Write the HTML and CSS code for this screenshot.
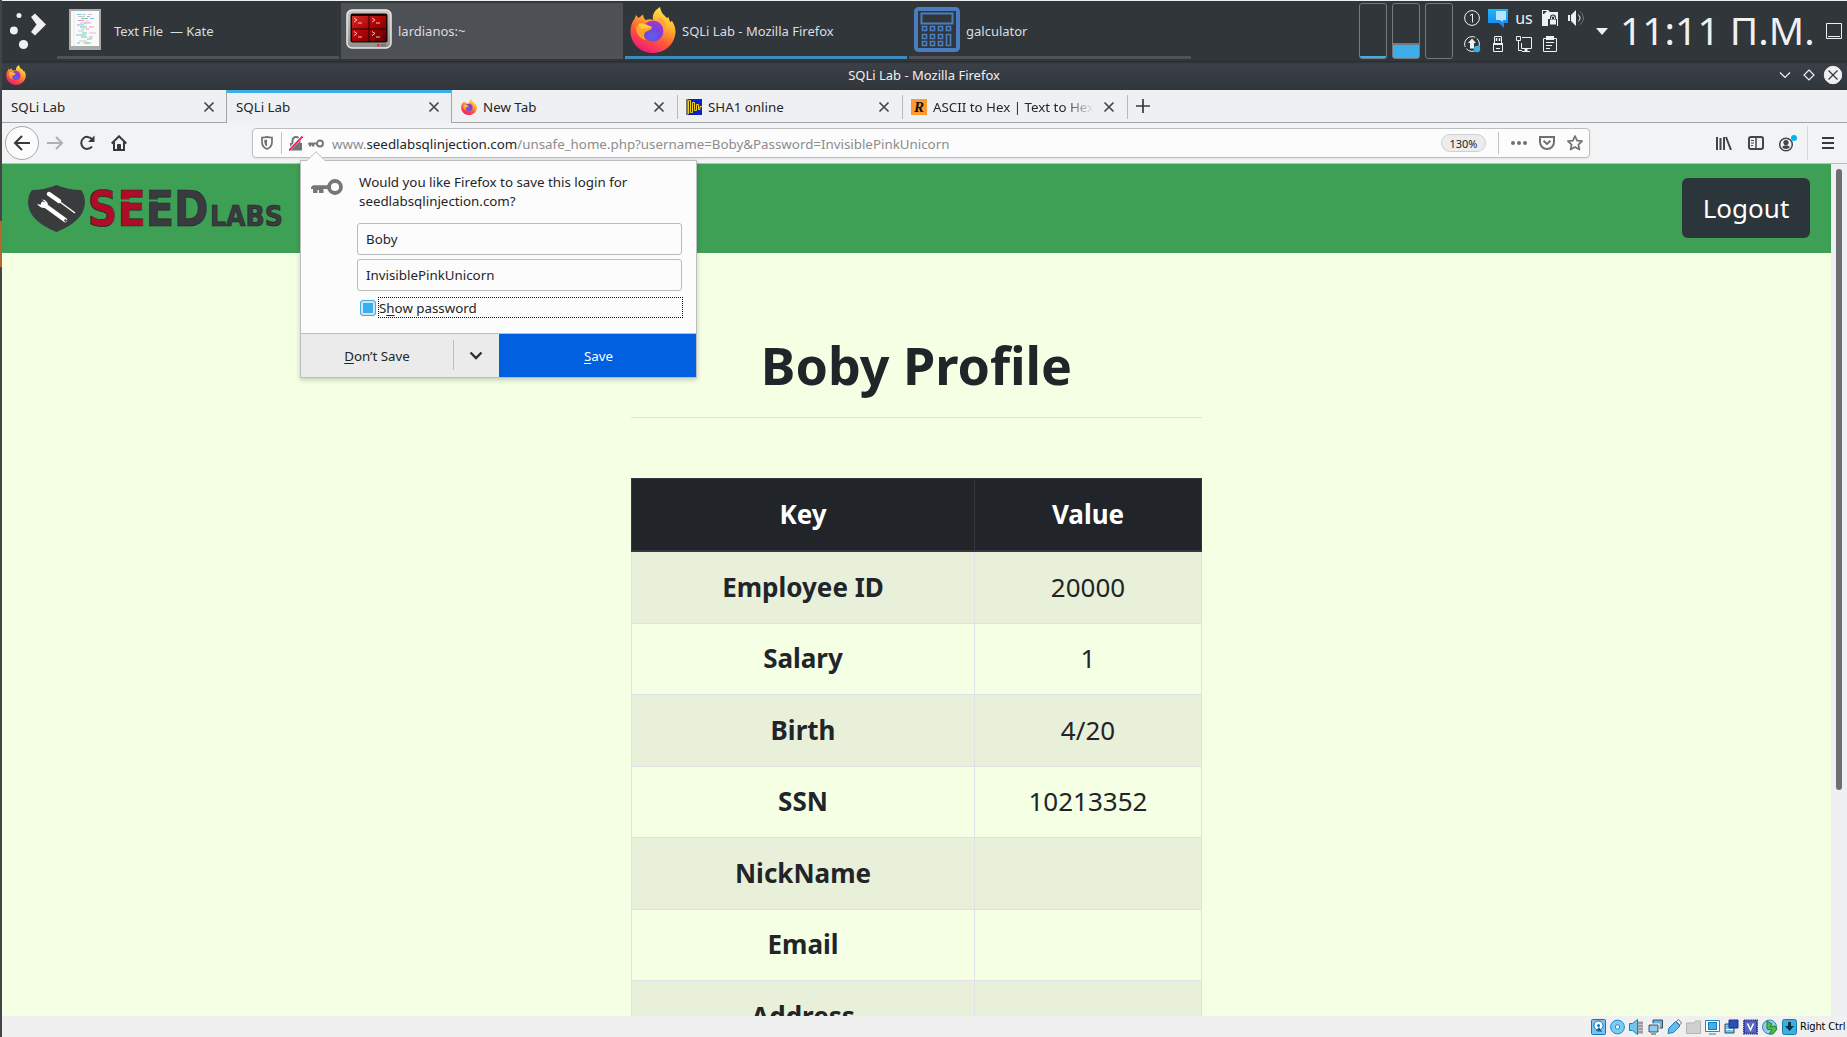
FILE: index.html
```html
<!DOCTYPE html>
<html lang="en">
<head>
<meta charset="utf-8">
<title>SQLi Lab - Mozilla Firefox</title>
<link rel="stylesheet" href="styles.css">
</head>
<body>
<svg class="defs" width="0" height="0" aria-hidden="true">
  <defs>
    <linearGradient id="flame" x1=".8" y1="0" x2=".3" y2="1"><stop offset="0" stop-color="#fff44f"/><stop offset=".35" stop-color="#ffb02e"/><stop offset=".65" stop-color="#ff5a36"/><stop offset="1" stop-color="#f0147e"/></linearGradient>
    <radialGradient id="globe" cx=".45" cy=".75" r=".7"><stop offset="0" stop-color="#5a63e8"/><stop offset=".6" stop-color="#7a3fdc"/><stop offset="1" stop-color="#a638d0"/></radialGradient>
    <linearGradient id="redscreen" x1="0" y1="0" x2="1" y2="1"><stop offset="0" stop-color="#d62b2b"/><stop offset=".45" stop-color="#b30505"/><stop offset="1" stop-color="#5c0000"/></linearGradient>
    <linearGradient id="bubble" x1="0" y1="0" x2="0" y2="1"><stop offset="0" stop-color="#1db5f7"/><stop offset="1" stop-color="#1a7ff0"/></linearGradient>
    <linearGradient id="bezel" x1="0" y1="0" x2="0" y2="1"><stop offset="0" stop-color="#c9c8c4"/><stop offset="1" stop-color="#8f8f8c"/></linearGradient>
    <symbol id="firefox" viewBox="0 0 46 46">
      <path fill="url(#flame)" d="M23 46C10 46 0 36 0.500 23C1 18 2 15 4.500 12L6 8L8.500 11L13 7.500C13.500 10 14 11.500 15.500 13C19 12 21 12 23 13C22 7 25 3 30 0C31 6 34 8 37 11L38.500 10L40 15L42 14C44.500 18 45.500 21 45.500 25C45 37 35 46 23 46Z"/>
      <circle cx="23" cy="24" r="10.500" fill="url(#globe)"/>
      <path fill="#ffa526" d="M6 20C10 17 16 19 22 20C22 23 18 23.500 15.500 25C13.500 27 13.500 30 16 33C10 32 6 27 6 20Z"/>
      <path fill="#ffc83a" d="M8 17C12 15 17 18 22 20C17 22 14 21 12.500 22C10 21 8 20 8 17Z"/>
      <path fill="#ff9a36" d="M26 13C32 15 35 20 33.500 27C37 22 36 15 31 10Z" opacity=".7"/>
    </symbol>
    <symbol id="close" viewBox="0 0 12 12"><path d="M1.500 1.500L10.500 10.500M10.500 1.500L1.500 10.500" fill="none" stroke="#454749" stroke-width="1.700"/></symbol>
    <symbol id="key" viewBox="0 0 32 16"><circle cx="24" cy="8" r="6" fill="none" stroke="#767779" stroke-width="3.800"/><path fill="#767779" d="M18 6.200H2L0 8.200V10H2V14H6.500V11H8V14H12.500V10H18Z"/></symbol>
  </defs>
</svg>

<div class="screen">
  <div class="edge"><i></i></div>
  <div class="desktop">

    <header class="panel">
      <svg class="launcher" width="36" height="37" viewBox="0 0 36 37" fill="#eff0f1"><circle cx="9" cy="2.500" r="2.500"/><circle cx="3.800" cy="17.500" r="4"/><circle cx="13.500" cy="31.500" r="4.600"/><path d="M21 4L25 0.500L36 11.500L25 22.500L21 19L26.500 11.500Z"/></svg>
      <nav class="tasks">
        <div class="task task-kate">
          <svg width="32" height="41" viewBox="0 0 32 41"><rect width="32" height="41" fill="#a9aaac"/><path d="M2 2H30V37H2Z" fill="#fafafa"/><path d="M5 2V37" stroke="#ddd" stroke-width=".6"/>
            <g fill="none" stroke-width="1"><path stroke="#c9c9c9" d="M13 5.500H17M19 5.500H23M9 7.500H16M11 14H17M9 22H15M10 32H18M20 24H27M17 12H20M12 20H16M14 34H20"/><path stroke="#f48fd6" d="M18 7.500H21M9 11.500H15M15 14H22M20 18H25M17 20H20M20 28H24"/><path stroke="#6cd3a4" d="M12 9.500H19M11 18H18M18 24H13M12 28H18M18 30H23M16 34H22"/><path stroke="#69c7f0" d="M8 5.500H12M8 16H15M7 26H17M8 34H11M21 9.500H25"/></g></svg>
          <span>Text File&nbsp; — Kate</span>
        </div>
        <div class="task task-term">
          <svg width="46" height="41" viewBox="0 0 46 41"><rect x="1" y="1" width="44" height="38" rx="5" fill="url(#bezel)" stroke="#e9e8e4" stroke-width="1.500"/><rect x="4.500" y="4.500" width="37" height="29" rx="2" fill="#1a0505"/><path d="M6 7H22.500V19.500H6ZM23.500 7H40V19.500H23.500ZM6 20.500H22.500V32H6ZM23.500 20.500H40V32H23.500Z" fill="url(#redscreen)"/><path d="M8 9L11 11L8 13M12 14H16M26 9L29 11L26 13M30 14H34M8 22.500L11 24.500L8 26.500M12 28H16M26 22.500L29 24.500L26 26.500M30 28H34" fill="none" stroke="#f3c1c1"/><rect x="31" y="35" width="2.500" height="2.500" fill="#f22"/><rect x="35" y="35" width="5" height="2.500" fill="#777"/></svg>
          <span>lardianos:~</span>
        </div>
        <div class="task task-firefox">
          <svg width="46" height="46"><use href="#firefox"/></svg>
          <span>SQLi Lab - Mozilla Firefox</span>
        </div>
        <div class="task task-calc">
          <svg width="46" height="45" viewBox="0 0 46 45" fill="none" stroke="#4a7cc0"><rect x="2" y="2" width="42" height="41" rx="2.500" stroke-width="4"/><rect x="7.500" y="6.500" width="31" height="10" stroke-width="2"/><path stroke-width="1.700" d="M8.500 19.500h4v4h-4zM16.500 19.500h4v4h-4zM24.500 19.500h4v4h-4zM32.500 19.500h4v4h-4zM8.500 27.500h4v4h-4zM16.500 27.500h4v4h-4zM24.500 27.500h4v4h-4zM8.500 34.500h4v4h-4zM16.500 34.500h4v4h-4zM24.500 34.500h4v4h-4zM32.500 27.500h4v11h-4z"/></svg>
          <span>galculator</span>
        </div>
      </nav>
      <div class="meters"><div class="meter meter-low"></div><div class="meter meter-mid"></div><div class="meter"></div></div>
      <div class="tray">
        <svg width="16" height="16" viewBox="0 0 16 16" fill="none" stroke="#eff0f1"><circle cx="8" cy="8" r="7.400"/><path d="M6 5.500L8.500 4V12.500"/></svg>
        <svg width="20" height="19" viewBox="0 0 20 19"><path fill="url(#bubble)" d="M0 0H20V14H16V19L11 14H0Z"/><path fill="#b9e3fb" d="M8 2H18V11H15V13L12 11H8Z"/></svg>
        <span class="layout">us</span>
        <svg width="16" height="16" viewBox="0 0 16 16"><path fill="#eff0f1" d="M0 0H6L8 2H16V16H0Z"/><path d="M6 16V9H8V7.500A3 3 0 0 1 14 7.500V9H15V16Z" fill="#30363a"/><path d="M8 9.500H14V14.500H8Z" fill="#eff0f1"/><path d="M9.500 9V7.500A1.500 1.500 0 0 1 12.500 7.500V9M1 4L4 1H1Z" fill="none" stroke="#eff0f1"/><path d="M1 1H5L2 4H1Z" fill="#30363a"/></svg>
        <svg width="16" height="16" viewBox="0 0 16 16"><path fill="#eff0f1" d="M0 5H2V11H0ZM3 5L8 0V16L3 11Z"/><path d="M10 4.500A4 4 0 0 1 10 11.500" fill="none" stroke="#eff0f1"/><path d="M12 1.500A8 8 0 0 1 12 14.500" fill="none" stroke="#73787b"/></svg>
        <svg width="17" height="17" viewBox="0 0 17 17"><circle cx="8" cy="8" r="7.400" fill="none" stroke="#eff0f1" stroke-dasharray="18 2"/><path fill="#eff0f1" d="M8 2.500L12 7H10V12.500H6V7H4Z"/><circle cx="13" cy="13" r="3.200" fill="#3daee9"/></svg>
        <svg width="12" height="16" viewBox="0 0 12 16" fill="none" stroke="#eff0f1"><path d="M2.500 7V.500H9.500V7M1.500 8.500H10.500V15.500H1.500ZM4 12.500H8" /><path d="M4.500 2V5M7.500 2V5" stroke-width="1.500"/><path d="M1 8H11" stroke-width="2"/></svg>
        <svg width="16" height="16" viewBox="0 0 16 16" fill="none" stroke="#eff0f1"><path d="M.500 .500H4.500V4.500H.500ZM2.500 5V14.500H6M6 1.500H15.500V12.500H5.500V7M6 15.500H14"/><path d="M10 12V15" stroke-width="3"/></svg>
        <svg width="14" height="16" viewBox="0 0 14 16" fill="none" stroke="#eff0f1"><path d="M.500 2.500H13.500V15.500H.500ZM3 6.500H11M3 9.500H9M3 12.500H7"/><path d="M3 2H11" stroke-width="4"/></svg>
      </div>
      <svg class="tray-arrow" width="12" height="7"><path d="M0 0H12L6 7Z" fill="#eff0f1"/></svg>
      <time class="clock">11:11 Π.Μ.</time>
      <svg class="show-desktop" width="16" height="16" fill="none" stroke="#eff0f1"><path d="M.500 .500H15.500V15.500H.500ZM2 13.500H14"/></svg>
    </header>

    <div class="titlebar">
      <svg class="title-icon" width="20" height="20"><use href="#firefox"/></svg>
      <span class="title">SQLi Lab - Mozilla Firefox</span>
      <svg class="win-buttons" width="64" height="20" viewBox="0 0 64 20" fill="none" stroke="#eff0f1"><path d="M2 7.500L7 12.500L12 7.500M31 5L36 10L31 15L26 10Z" stroke-width="1.200"/><circle cx="55" cy="10" r="8.700" fill="#eff0f1"/><path d="M50.500 5.500L59.500 14.500M59.500 5.500L50.500 14.500" stroke="#31363b" stroke-width="1.200"/></svg>
    </div>

    <div class="tabs">
      <div class="tab"><span class="tab-label">SQLi Lab</span><svg width="12" height="12"><use href="#close"/></svg></div>
      <div class="tab active"><span class="tab-label">SQLi Lab</span><svg width="12" height="12"><use href="#close"/></svg></div>
      <div class="tab"><svg class="favicon" width="16" height="16"><use href="#firefox"/></svg><span class="tab-label">New Tab</span><svg width="12" height="12"><use href="#close"/></svg></div>
      <div class="tab divided"><svg class="favicon" width="16" height="16" viewBox="0 0 16 16"><path fill="#0b22c4" d="M0 0H16V16H0Z"/><path d="M1 0V16M2.500 15V1.500H4.500V13.500H6.500V3.500H8.500V11.500H10.500V5.500H12.500V10.500H14V7.500H16" fill="none" stroke="#f1d21c"/></svg><span class="tab-label">SHA1 online</span><svg width="12" height="12"><use href="#close"/></svg></div>
      <div class="tab divided"><span class="favicon letter">R</span><span class="tab-label faded">ASCII to Hex | Text to Hex</span><svg width="12" height="12"><use href="#close"/></svg></div>
      <div class="new-tab"><svg width="14" height="14"><path d="M7 0V14M0 7H14" stroke="#38393b" stroke-width="1.700"/></svg></div>
    </div>

    <div class="toolbar">
      <button class="back"><svg width="18" height="16" viewBox="0 0 18 16" fill="none" stroke="#38393b" stroke-width="2"><path d="M17 8H2M9 1L2 8L9 15"/></svg></button>
      <svg class="forward" width="17" height="14" viewBox="0 0 17 14" fill="none" stroke="#aeb0b2" stroke-width="2"><path d="M0 7H15M9 1L15 7L9 13"/></svg>
      <svg class="reload" width="16" height="16" viewBox="0 0 16 16" fill="none" stroke="#38393b" stroke-width="2"><path d="M12.800 4A6 6 0 1 0 13 11.500"/><path d="M15.500 .500V7H9Z" fill="#38393b" stroke="none"/></svg>
      <svg class="home" width="16" height="16" viewBox="0 0 16 16" fill="none" stroke="#38393b" stroke-width="2"><path d="M.700 8.500L8 1.300L15.300 8.500M3 7V15H13V7"/><path d="M6.500 15V9.500H9.500V15" fill="#38393b" stroke-width="1"/></svg>
      <div class="urlbar">
        <svg class="shield" width="12" height="14" viewBox="0 0 12 14"><path d="M1 1.500Q4 1.500 6 .900Q8 1.500 11 1.500V6Q11 11 6 13Q1 11 1 6Z" fill="none" stroke="#6f7072" stroke-width="1.700"/><path d="M6 3.500V10.500Q3.300 9 3.300 6V4Z" fill="#6f7072"/></svg>
        <i class="bar"></i>
        <svg class="lock" width="14" height="15" viewBox="0 0 14 15"><path d="M1 7H13V14.500H1Z" fill="#737475"/><path d="M3.500 7V4.500A3.500 3.500 0 0 1 10.500 4.500V7" fill="none" stroke="#737475" stroke-width="2"/><path d="M0 14L13 .500" stroke="#fff" stroke-width="3"/><path d="M0 14.500L13.500 .500" stroke="#ff0f4f" stroke-width="1.800"/></svg>
        <svg class="key" width="16" height="9"><use href="#key"/></svg>
        <span class="url">www.<b>seedlabsqlinjection.com</b>/unsafe_home.php?username=Boby&amp;Password=InvisiblePinkUnicorn</span>
        <span class="zoom">130%</span>
        <i class="bar"></i>
        <svg class="dots" width="16" height="4" fill="#6f7072"><circle cx="2" cy="2" r="2"/><circle cx="8" cy="2" r="2"/><circle cx="14" cy="2" r="2"/></svg>
        <svg class="pocket" width="16" height="14" viewBox="0 0 16 14" fill="none" stroke="#6f7072" stroke-width="2"><path d="M1 1H15V6A7 7 0 0 1 1 6Z"/><path d="M4.500 4.800L8 8L11.500 4.800"/></svg>
        <svg class="star" width="16" height="16" viewBox="0 0 16 16" fill="none" stroke="#6f7072" stroke-width="1.700" stroke-linejoin="round"><path d="M8 1L10.100 5.600L15.100 6.200L11.400 9.600L12.400 14.600L8 12.100L3.600 14.600L4.600 9.600L.900 6.200L5.900 5.600Z"/></svg>
      </div>
      <div class="actions">
        <svg width="16" height="14" viewBox="0 0 16 14" fill="none" stroke="#444547" stroke-width="2"><path d="M1 1V14M4.500 2V14M8 1V14M10 1L15 14"/></svg>
        <svg width="16" height="14" viewBox="0 0 16 14" fill="none" stroke="#444547" stroke-width="2"><rect x="1" y="1" width="14" height="12" rx="2"/><path d="M8 1V13" stroke-width="1.500"/><path d="M3 4.500H6M3 7H6M3 9.500H5" stroke-width="1"/></svg>
        <svg width="18" height="17" viewBox="0 0 18 17"><circle cx="7" cy="9.500" r="6.300" fill="none" stroke="#444547" stroke-width="1.500"/><circle cx="7" cy="7.500" r="2.600" fill="#444547"/><path d="M2.800 12Q7 8.500 11.200 12Q7 16 2.800 12" fill="#444547"/><circle cx="15" cy="3" r="3" fill="#00b3f4"/></svg>
        <i class="bar"></i>
        <svg width="12" height="12" stroke="#38393b" stroke-width="2"><path d="M0 1H12M0 6H12M0 11H12"/></svg>
      </div>
    </div>

    <div class="viewport">
      <main class="page">
        <div class="site-nav">
          <svg class="logo" width="256" height="50" viewBox="0 0 256 50">
            <path fill="#3a3b3d" d="M28.500 0Q17 5 4 5Q0 10 0 18Q1 36 28.500 47Q56 36 57 18Q57 10 53 5Q40 5 28.500 0Z"/>
            <path d="M21 9L32 17M32 17L47 28" stroke="#fff" stroke-width="1.500"/><path d="M21 9L31 16" stroke="#fff" stroke-width="4.500" stroke-linecap="round"/>
            <path d="M15 19L37 35" stroke="#fff" stroke-width="4.500" stroke-linecap="round"/><path d="M9 19L14 20L17 17L14 14.500Q20 15 20 21Q15 26 9 19Z" fill="#fff"/><circle cx="37.500" cy="35.500" r="1.200" fill="#3a3b3d"/>
            <g class="logo-text"><text x="59.500" y="41" font-size="49" textLength="121" lengthAdjust="spacingAndGlyphs"><tspan fill="#ae0c27">SE</tspan><tspan fill="#3a3b3f">ED</tspan></text><text x="182" y="41" font-size="28.500" textLength="73" lengthAdjust="spacingAndGlyphs" fill="#3a3b3f">LABS</text></g>
            <path d="M90 15.500H149" stroke="#3ea055" stroke-width="2"/>
          </svg>
          <button class="logout">Logout</button>
        </div>
        <section class="profile">
          <h1>Boby Profile</h1>
          <hr>
          <table>
            <thead><tr><th>Key</th><th>Value</th></tr></thead>
            <tbody>
              <tr><th>Employee ID</th><td>20000</td></tr>
              <tr><th>Salary</th><td>1</td></tr>
              <tr><th>Birth</th><td>4/20</td></tr>
              <tr><th>SSN</th><td>10213352</td></tr>
              <tr><th>NickName</th><td></td></tr>
              <tr><th>Email</th><td></td></tr>
              <tr><th>Address</th><td></td></tr>
            </tbody>
          </table>
        </section>
      </main>
      <div class="scrollbar"><div class="thumb"></div></div>
    </div>

    <footer class="status">
      <svg width="15" height="16" viewBox="0 0 15 16"><rect x=".500" y=".500" width="14" height="15" rx="1" fill="#7cc0ee" stroke="#0b78bb"/><circle cx="7.500" cy="6.500" r="4.500" fill="#fff" stroke="#0b78bb"/><circle cx="7.500" cy="6.500" r="1.500" fill="#0b78bb"/><path d="M5 12L8 8L11 13Z" fill="#0b60a0"/></svg>
      <svg width="15" height="16" viewBox="0 0 15 16"><circle cx="7.500" cy="8" r="6.900" fill="#7ccdf5" stroke="#1b8bd0"/><circle cx="7.500" cy="8" r="2.200" fill="#fff" stroke="#1b8bd0"/></svg>
      <svg width="15" height="16" viewBox="0 0 15 16"><path d="M8 2H14V15H8Z" fill="#c4c6c8"/><path d="M9 4H14M9 7H14M9 10H14M9 13H14" stroke="#777"/><path d="M.500 4.500H3.500L8.500 .500V15.500L3.500 11.500H.500Z" fill="#74c4f0" stroke="#167ebf"/></svg>
      <svg width="15" height="16" viewBox="0 0 15 16"><path d="M5 1H14.500V9H5Z" fill="#5eb7ed" stroke="#45494d"/><path d="M1 6H10V13H1Z" fill="#8dcdf5" stroke="#fff" stroke-width="3"/><path d="M1 6H10V13H1ZM3 15H8" fill="#8dcdf5" stroke="#45494d"/></svg>
      <svg width="15" height="16" viewBox="0 0 15 16"><path d="M1 14.500L2 9L8.500 2.500L13 7L6.500 13.500Z" fill="#61baf0" stroke="#1b7ebd"/><path d="M9.500 2.500L11.500 .500L14.500 4L12.500 6Z" fill="#fff" stroke="#666"/></svg>
      <svg width="15" height="16" viewBox="0 0 15 16"><path d="M.500 4H8L9.500 2H14.500V14.500H.500Z" fill="#d0d0d0" stroke="#b4b4b4"/></svg>
      <svg width="15" height="16" viewBox="0 0 15 16"><path d="M.500 1.500H14.500V12.500H.500ZM4 15H11" fill="#fff" stroke="#2b86b8"/><rect x="3.500" y="3.500" width="8" height="7" fill="#43aeea" stroke="#167ebf"/></svg>
      <svg width="15" height="16" viewBox="0 0 15 16"><path d="M1 5H10V14H1Z" fill="#74c4f0" stroke="#45494d"/><path d="M5 1H14V9H5Z" fill="#2b4fae" stroke="#1a338d"/><path d="M2 10.500H9" stroke="#fff"/></svg>
      <svg width="15" height="16" viewBox="0 0 15 16"><rect x="1" y="1.500" width="13" height="13" fill="#5a68c4" stroke="#2b3592" stroke-width="2" stroke-dasharray="1.500 .6"/><path d="M4.500 4.500L7.500 11L10.500 4.500" fill="none" stroke="#fff" stroke-width="1.500"/></svg>
      <svg width="16" height="16" viewBox="0 0 16 16"><circle cx="7.500" cy="8" r="7" fill="#8cccf0" stroke="#3584ba"/><path d="M5 2L10 5L8 8L13 7L15 10L11 15H7L10 11L5 10Z" fill="#55b948" stroke="#23812b"/></svg>
      <svg width="15" height="16" viewBox="0 0 15 16"><rect x=".500" y=".500" width="14" height="15" rx="2" fill="#3eaede" stroke="#187ca8"/><path d="M6 3H9V7H12L7.500 12L3 7H6Z" fill="#0d3149"/></svg>
      <span>Right Ctrl</span>
    </footer>

    <div class="doorhanger">
      <svg class="arrow" width="20" height="10" viewBox="0 0 20 10"><path d="M0 10L10 .800L20 10Z" fill="#fcfcfc"/><path d="M0 9.500H1L10 .800L19 9.500H20" fill="none" stroke="#bcbebf"/></svg>
      <div class="prompt">
        <svg class="prompt-key" width="32" height="16"><use href="#key"/></svg>
        <div class="prompt-body">
          <p>Would you like Firefox to save this login for seedlabsqlinjection.com?</p>
          <div class="field">Boby</div>
          <div class="field">InvisiblePinkUnicorn</div>
          <div class="check"><i></i><span>S<u>h</u>ow password</span></div>
        </div>
      </div>
      <div class="buttons">
        <div class="dont"><span><u>D</u>on’t Save</span></div>
        <div class="more"><svg width="14" height="9" fill="none" stroke="#2a2c2e" stroke-width="2.300"><path d="M1.500 1.500L7 7L12.500 1.500"/></svg></div>
        <div class="save"><span><u>S</u>ave</span></div>
      </div>
    </div>
  </div>
</div>
</body>
</html>
```
FILE: styles.css
```css
* { box-sizing: border-box; }
body { margin: 0; overflow: hidden; font-family: "Noto Sans", sans-serif; font-size: 13.333px; color: #232629; }
svg { display: block; flex: none; }
button { border: 0; padding: 0; font: inherit; }
.defs { position: absolute; }
.screen { display: flex; width: 1847px; height: 1037px; overflow: hidden; }
.edge { flex: none; width: 2px; background: #454548; padding-top: 221px; }
.edge i { display: block; height: 46px; background: #b5682f; }
.desktop { position: relative; flex: 1; display: flex; flex-direction: column; min-width: 0; }

/* Desktop panel */
.panel { flex: none; height: 61px; display: flex; align-items: flex-start; border-top: 1px solid #eff0f1; background: #30363a; color: #eff0f1; }
.launcher { margin: 12px 11px 0 8px; }
.tasks { display: flex; gap: 2px; padding-top: 2px; width: 1134px; font-size: 13px; }
.task { width: 282px; height: 56px; display: flex; align-items: center; border-bottom: 3px solid #4f5257; color: #dcdee0; white-space: nowrap; }
.task span { padding-top: 2px; }
.task-kate { padding-left: 12px; gap: 13px; }
.task-term { padding-left: 5px; gap: 6px; background: #4d5055; }
.task-firefox { padding-left: 5px; gap: 6px; border-color: #3d8cba; }
.task-calc { padding-left: 5px; gap: 6px; }
.meters { display: flex; gap: 5px; margin: 2px 0 0 168px; }
.meter { width: 28px; height: 56px; border: 1px solid #74797b; border-radius: 3px; }
.meter-low { background: linear-gradient(to top, #3daee9 2px, transparent 2px); }
.meter-mid { background: linear-gradient(to top, #3daee9 13px, #74797b 13px, #74797b 15px, transparent 15px); }
.tray { display: grid; grid-template-columns: repeat(5, 26px); grid-template-rows: 26px 26px; place-items: center; margin: 4px 0 0 6px; width: 130px; }
.layout { font-size: 16px; line-height: 20px; }
.tray-arrow { margin: 27px 0 0 7px; }
.clock { width: 195px; margin: 1px 0 0 12px; font-size: 39px; line-height: 56px; white-space: nowrap; }
.show-desktop { margin: 22px 0 0 11px; }

/* Window frame */
.titlebar { flex: none; height: 29px; display: flex; align-items: center; background: linear-gradient(#272b2e, #3b4047 3px, #31363b); color: #eff0f1; }
.title-icon { margin: -2px 0 0 4px; }
.title { flex: 1; padding: 0 0 2px 44px; font-size: 13px; text-align: center; }
.win-buttons { margin: -2px 5px 0 0; }
.tabs { flex: none; height: 33px; display: flex; background: #eff0f2; }
.tab { width: 225px; display: flex; align-items: center; padding: 2px 12px 0 9px; border-bottom: 1px solid #a3a4a6; white-space: nowrap; }
.tab.active { width: 226px; margin-left: -1px; padding: 0 11px 2px 9px; border: 1px solid #a3a4a6; border-top: 3px solid #3daee9; border-bottom: 0; }
.tab.divided { background: linear-gradient(#b8b9bb, #b8b9bb) 0 5px / 1px 24px no-repeat; }
.tab-label { flex: 1; overflow: hidden; }
.favicon { width: 16px; height: 16px; margin: 0 6px 0 0; }
.letter { background: #ff9a2e; color: #111; font: italic bold 15px/16px "Liberation Serif", serif; text-align: center; }
.faded { margin-right: 9px; -webkit-mask-image: linear-gradient(to left, transparent, #000 30px); mask-image: linear-gradient(to left, transparent, #000 30px); }
.new-tab { flex: 1; display: flex; align-items: center; padding-left: 9px; border-bottom: 1px solid #a3a4a6; background: linear-gradient(#b8b9bb, #b8b9bb) 0 5px / 1px 24px no-repeat; }

/* Navigation toolbar */
.toolbar { flex: none; height: 41px; display: flex; align-items: center; background: #f2f3f5; border-bottom: 1px solid #babbbd; }
.back { width: 34px; height: 34px; margin-left: 3px; display: flex; align-items: center; justify-content: center; border: 1px solid #a5a7a9; border-radius: 50%; background: #fcfcfc; }
.forward { margin-left: 8px; }
.reload { margin-left: 15px; }
.home { margin-left: 16px; }
.urlbar { width: 1338px; height: 30px; margin-left: 125px; display: flex; align-items: center; background: #fcfcfc; border: 1px solid #bcbebf; border-radius: 4px; box-shadow: 0 1px 2px #0001; }
.shield { margin-left: 8px; }
.bar { width: 1px; height: 22px; background: #c0c2c3; }
.shield + .bar { margin-left: 8px; }
.lock { margin-left: 7px; }
.key { margin-left: 5px; }
.url { flex: 1; padding: 1px 0 0 8px; color: #8b8d8f; white-space: nowrap; }
.url b { font-weight: 400; color: #232629; }
.zoom { width: 45px; height: 18px; border: 1px solid #d0d0d1; border-radius: 9px; background: #ececec; font-size: 11px; line-height: 17px; text-align: center; }
.zoom + .bar { margin-left: 12px; }
.dots { margin-left: 12px; }
.pocket { margin-left: 12px; }
.star { margin: 0 6px 0 12px; }
.actions { flex: 1; display: flex; align-items: center; padding-left: 126px; gap: 15.500px; }
.actions .bar { height: 34px; margin: 0 -1px 0 -6px; background: #d6d7d9; }

/* Page */
.viewport { flex: none; height: 852px; display: flex; }
.page { width: 1829px; overflow: hidden; background: #f4ffe4; }
.site-nav { height: 89px; display: flex; justify-content: space-between; align-items: flex-start; padding: 14px 21px 0 26px; background: #3ea055; }
.logo { margin-top: 7px; overflow: visible; }
.logo-text { font-family: "DejaVu Sans", sans-serif; font-weight: 700; stroke: #242628; stroke-width: .7px; }
.logout { width: 128px; height: 60px; border-radius: 6px; background: #2c353a; color: #fff; font-size: 26px; }
.profile { width: 571px; margin: 0 auto; padding-top: 72px; }
.profile h1 { margin: 0 0 12px; font-size: 52px; line-height: 80px; text-align: center; color: #212529; }
.profile hr { height: 1px; margin: 0 0 60px; border: 0; background: #dbe6cd; }
table { width: 571px; table-layout: fixed; border-collapse: collapse; font-size: 26px; line-height: 39px; text-align: center; color: #212529; }
th, td { height: 71.5px; padding: 15px; border: 1px solid #dee2e6; }
thead th { height: 72px; color: #fff; background: #212529; border-color: #32383e; border-bottom-width: 2px; }
thead th:first-child { width: 343px; }
tbody tr:first-child > * { height: 72.5px; }
tbody tr:nth-child(odd) { background: #e8f0d9; }
.scrollbar { width: 16px; padding: 5px 0 0 5px; background: #eff0f2; }
.thumb { width: 6px; height: 621px; border-radius: 3px; background: #6d6e70; }

/* Status bar */
.status { flex: 1; display: flex; align-items: flex-start; justify-content: flex-end; gap: 4px; padding: 3px 1px 0 0; background: #f0f0f0; }
.status span { width: 46px; margin-left: -1px; font: 11px/16px "DejaVu Sans Condensed", "DejaVu Sans", sans-serif; font-stretch: condensed; letter-spacing: -.15px; color: #000; white-space: nowrap; }

/* Save-login popup */
.doorhanger { position: absolute; left: 298px; top: 160px; width: 397px; height: 218px; display: flex; flex-direction: column; background: #fcfcfc; border: 1px solid #bcbebf; box-shadow: 0 2px 5px #0003; }
.arrow { position: absolute; left: 5px; top: -10px; }
.prompt { flex: 1; display: flex; padding: 12px 14px 0 10px; }
.prompt-key { margin-top: 6px; }
.prompt-body { flex: 1; padding-left: 14px; }
.prompt p { width: 300px; margin: 0 0 12px 2px; line-height: 19px; }
.field { height: 32px; margin-bottom: 4px; padding-left: 8px; border: 1px solid #b9bbbc; border-radius: 3px; line-height: 31px; }
.check { display: flex; align-items: center; margin: 6px -1px 0 3px; gap: 2px; }
.check i { width: 16px; height: 16px; border: 1px solid #3daee9; border-radius: 3px; background: #3daee9; box-shadow: inset 0 0 0 2px #cfe6f2; }
.check span { flex: 1; height: 21px; border: 1px dotted #111; line-height: 20px; }
u { text-underline-offset: 2px; }
.buttons { display: flex; height: 44px; border-top: 1px solid #bcbebf; background: #ebebeb; }
.buttons > div { display: flex; align-items: center; justify-content: center; }
.dont { width: 152px; }
.more { width: 46px; background: linear-gradient(#bcbebf, #bcbebf) 0 6px / 1px 30px no-repeat; }
.save { flex: 1; padding-left: 2px; background: #0060df; color: #fff; }
```
